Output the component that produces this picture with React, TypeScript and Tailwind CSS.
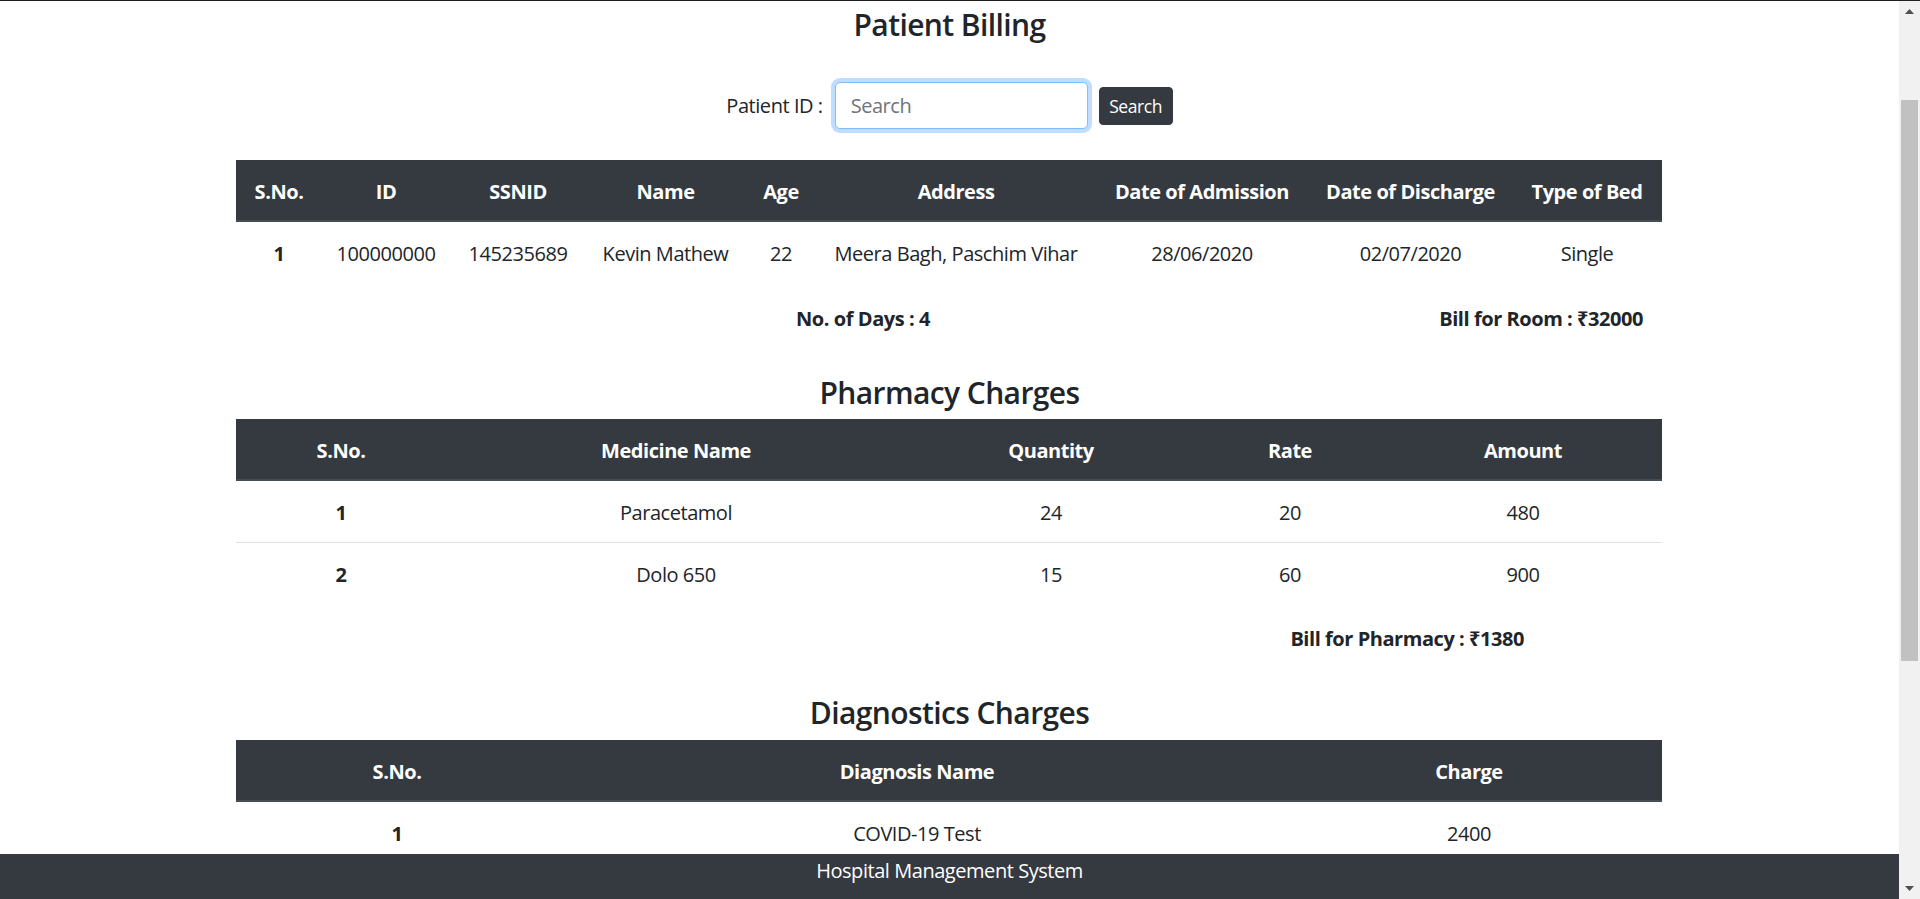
import React from "react";

const cell = "text-center whitespace-nowrap text-[20px] leading-[30px] tracking-[-0.45px]";
const heading = "text-center text-[30px] leading-[36px] font-semibold tracking-[-0.6px]";

function Scrollbar() {
  return (
    <div className="w-[21px] h-full bg-[#f1f1f1] flex flex-col items-center">
      <div className="h-[21px] w-full flex items-center justify-center">
        <svg width="9" height="5" viewBox="0 0 9 5">
          <path d="M0 5 L4.5 0 L9 5 Z" fill="#505050" />
        </svg>
      </div>
      <div className="mt-[78px] w-[17px] h-[561px] bg-[#c1c1c1]" />
      <div className="flex-1" />
      <div className="h-[21px] w-full flex items-center justify-center">
        <svg width="9" height="5" viewBox="0 0 9 5">
          <path d="M0 0 L4.5 5 L9 0 Z" fill="#505050" />
        </svg>
      </div>
    </div>
  );
}

export default function App() {
  const t1Head = [
    "S.No.",
    "ID",
    "SSNID",
    "Name",
    "Age",
    "Address",
    "Date of Admission",
    "Date of Discharge",
    "Type of Bed",
  ];
  const t1Row = [
    "100000000",
    "145235689",
    "Kevin Mathew",
    "22",
    "Meera Bagh, Paschim Vihar",
    "28/06/2020",
    "02/07/2020",
    "Single",
  ];
  const meds = [
    ["1", "Paracetamol", "24", "20", "480"],
    ["2", "Dolo 650", "15", "60", "900"],
  ];

  return (
    <div className="w-[1920px] h-[899px] overflow-hidden flex border-t border-[#1f1f1f] bg-white font-['Open_Sans','Noto_Sans',sans-serif] text-[#212529]">
      <div className="relative w-[1899px] h-full flex flex-col">
        <h4 className={`mt-[6px] ${heading}`}>Patient Billing</h4>

        <div className="mt-[39px] h-[47px] flex items-center justify-center">
          <label className="text-[20px] leading-[30px] tracking-[-0.45px] mr-[12px]">Patient ID :</label>
          <input
            placeholder="Search"
            className="w-[253px] h-[47px] border border-[#80bdff] rounded-[5px] px-[15px] text-[20px] leading-[30px] tracking-[-0.45px] text-[#495057] bg-white shadow-[0_0_0_4px_rgba(0,123,255,0.25)] outline-none placeholder:text-[#6c757d]"
          />
          <button className="ml-[11px] w-[74px] h-[38px] bg-[#343a40] border border-[#343a40] text-white text-[17.5px] leading-[26px] tracking-[-0.4px] rounded-[4px]">
            Search
          </button>
        </div>

        {/* Patient table */}
        <div className="mt-[31px] ml-[236px] w-[1426px]">
          <div className="grid grid-cols-[86px_128px_136px_159px_72px_278px_214px_203px_150px] h-[62px] bg-[#343a40] border-b-2 border-[#454d55] text-white font-bold pt-[17px]">
            {t1Head.map((h) => (
              <div key={h} className={cell}>
                {h}
              </div>
            ))}
          </div>
          <div className="grid grid-cols-[86px_128px_136px_159px_72px_278px_214px_203px_150px] h-[61px] pt-[17px]">
            <div className={`${cell} font-bold`}>1</div>
            {t1Row.map((v) => (
              <div key={v} className={cell}>
                {v}
              </div>
            ))}
          </div>
          <div className="mt-[21px] flex font-bold text-[20px] leading-[30px] tracking-[-0.45px]">
            <div className="w-[1254px] shrink-0 text-center whitespace-nowrap">No. of Days : 4</div>
            <div className="flex-1 min-w-0 flex justify-end pr-[19px] whitespace-nowrap">
              <span className="shrink-0">Bill for Room : ₹32000</span>
            </div>
          </div>
        </div>

        {/* Pharmacy */}
        <h4 className={`mt-[41px] ${heading}`}>Pharmacy Charges</h4>
        <div className="mt-[8px] ml-[236px] w-[1426px]">
          <div className="grid grid-cols-[210px_460px_290px_188px_278px] h-[62px] bg-[#343a40] border-b-2 border-[#454d55] text-white font-bold pt-[17px]">
            {["S.No.", "Medicine Name", "Quantity", "Rate", "Amount"].map((h) => (
              <div key={h} className={cell}>
                {h}
              </div>
            ))}
          </div>
          {meds.map((r, i) => (
            <div
              key={r[0]}
              className={`grid grid-cols-[210px_460px_290px_188px_278px] pt-[17px] pb-[14px] ${
                i > 0 ? "border-t border-[#dee2e6]" : ""
              }`}
            >
              {r.map((v, j) => (
                <div key={j} className={`${cell} ${j === 0 ? "font-bold" : ""}`}>
                  {v}
                </div>
              ))}
            </div>
          ))}
          <div className="mt-[20px] flex justify-end pr-[138px] font-bold text-[20px] leading-[30px] tracking-[-0.45px] whitespace-nowrap">
            <span>Bill for Pharmacy : ₹1380</span>
          </div>
        </div>

        {/* Diagnostics */}
        <h4 className={`mt-[41px] ${heading}`}>Diagnostics Charges</h4>
        <div className="mt-[9px] ml-[236px] w-[1426px]">
          <div className="grid grid-cols-[322px_718px_386px] h-[62px] bg-[#343a40] border-b-2 border-[#454d55] text-white font-bold pt-[17px]">
            {["S.No.", "Diagnosis Name", "Charge"].map((h) => (
              <div key={h} className={cell}>
                {h}
              </div>
            ))}
          </div>
          <div className="grid grid-cols-[322px_718px_386px] pt-[17px] pb-[14px]">
            <div className={`${cell} font-bold`}>1</div>
            <div className={cell}>COVID-19 Test</div>
            <div className={cell}>2400</div>
          </div>
        </div>

        <footer className="absolute bottom-0 left-0 right-0 h-[45px] pt-[2px] bg-[#343a40] text-white text-center text-[20px] leading-[30px] tracking-[-0.45px]">
          Hospital Management System
        </footer>
      </div>
      <Scrollbar />
    </div>
  );
}
